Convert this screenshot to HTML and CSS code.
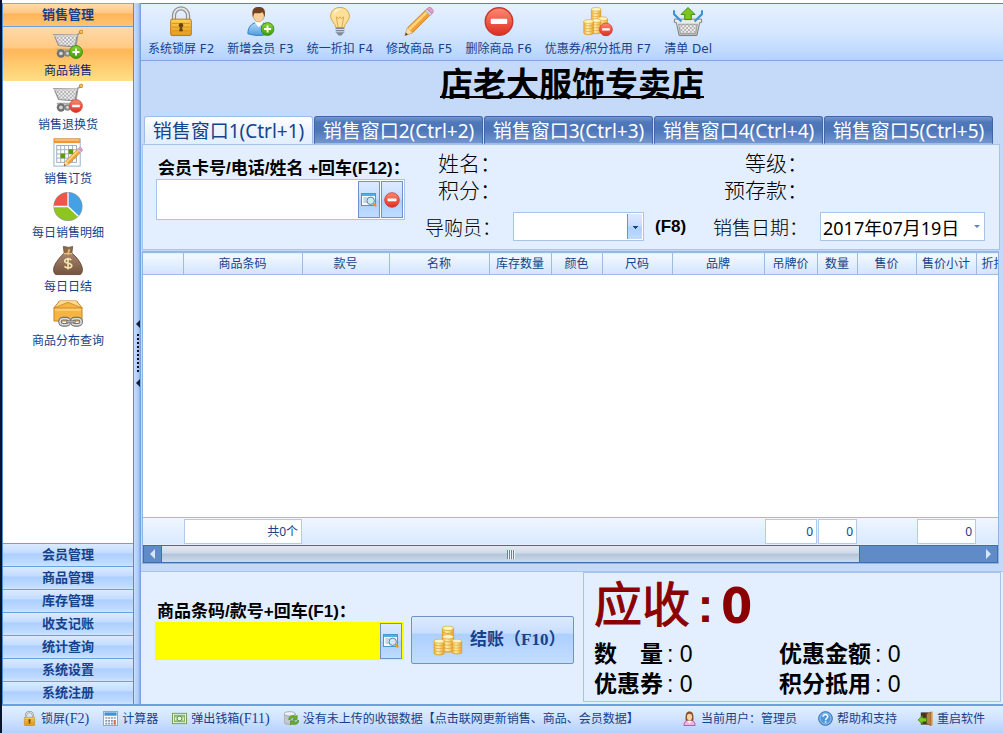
FILE: index.html
```html
<!DOCTYPE html>
<html lang="zh-CN">
<head>
<meta charset="utf-8">
<title>店老大服饰专卖店</title>
<link rel="stylesheet" href="styles.css">
</head>
<body>
<svg class="defs" aria-hidden="true">
  <defs>
    <linearGradient id="gold" x1="0" y1="0" x2="1" y2="0"><stop offset="0" stop-color="#f0b23c"/><stop offset=".4" stop-color="#fff0ae"/><stop offset="1" stop-color="#e6a52c"/></linearGradient>
    <linearGradient id="lockbody" x1="0" y1="0" x2="0" y2="1"><stop offset="0" stop-color="#ffd257"/><stop offset="1" stop-color="#e39a1b"/></linearGradient>
    <linearGradient id="steel" x1="0" y1="0" x2="0" y2="1"><stop offset="0" stop-color="#f4f4f4"/><stop offset="1" stop-color="#b9b9b9"/></linearGradient>
    <linearGradient id="redg" x1="0" y1="0" x2="0" y2="1"><stop offset="0" stop-color="#ff8a72"/><stop offset="1" stop-color="#dd2d22"/></linearGradient>
    <linearGradient id="greeng" x1="0" y1="0" x2="0" y2="1"><stop offset="0" stop-color="#8ed22f"/><stop offset="1" stop-color="#3f9e0c"/></linearGradient>
    <linearGradient id="blueg" x1="0" y1="0" x2="0" y2="1"><stop offset="0" stop-color="#b5dcfb"/><stop offset="1" stop-color="#4f9ddf"/></linearGradient>
    <linearGradient id="sackg" x1="0" y1="0" x2="0" y2="1"><stop offset="0" stop-color="#a9866c"/><stop offset="1" stop-color="#745440"/></linearGradient>
    <pattern id="mesh" width="4" height="4" patternUnits="userSpaceOnUse"><rect width="4" height="4" fill="#f0f0f0"/><path d="M0 0h2v2H0zM2 2h2v2H2z" fill="#b0b0b0"/></pattern>
    <symbol id="minus" viewBox="0 0 16 16"><circle cx="8" cy="8" r="7.3" fill="url(#redg)" stroke="#c9382c" stroke-width=".8"/><rect x="3.600" y="6.500" width="8.800" height="2.800" rx=".5" fill="#fff"/></symbol>
    <symbol id="plus" viewBox="0 0 16 16"><circle cx="8" cy="8" r="7.3" fill="url(#greeng)" stroke="#2f8a0b" stroke-width="1"/><path d="M8 4v8M4 8h8" stroke="#fff" stroke-width="2.2"/></symbol>
    <symbol id="cart" viewBox="0 0 32 32"><path d="M30 3l-3.500 2-3 17.500" fill="none" stroke="#a2a2a2" stroke-width="1.800"/><path d="M1 5.500l25 .5-2.500 12.500L6 17z" fill="url(#mesh)" stroke="#8d8d8d" stroke-width="1.200"/><path d="M1 6.500h25" stroke="#cfcfcf" stroke-width="1.800"/><path d="M4 21.500h20" stroke="#a9a9a9" stroke-width="2"/><circle cx="8.500" cy="25.500" r="4.500" fill="#707070"/><circle cx="8.500" cy="25.500" r="2" fill="#d2d2d2"/><circle cx="15.500" cy="25.500" r="3.500" fill="#8a8a8a"/><circle cx="15.500" cy="25.500" r="1.400" fill="#ddd"/><circle cx="30" cy="2.500" r="1.900" fill="#f8c458" stroke="#c07d1a" stroke-width=".9"/></symbol>
    <symbol id="i-cart-add" viewBox="0 0 32 32"><use href="#cart"/><use href="#plus" x="17" y="16.500" width="15" height="15"/></symbol>
    <symbol id="i-cart-del" viewBox="0 0 32 32"><use href="#cart"/><use href="#minus" x="17" y="16.500" width="15" height="15"/></symbol>
    <symbol id="pencil" viewBox="0 0 32 32"><path d="M1 31l2.500-8L24 3l5 5L9 28z" fill="#f5a12d" stroke="#c36f14" stroke-width=".8"/><path d="M4.500 23.500L24.500 4l1.800 1.800L6.500 25.500z" fill="#ffd583"/><path d="M1 31l2.500-8 5.300 5z" fill="#f7dcae"/><path d="M1 31l1-3.300 2.300 2.200z" fill="#554433"/><path d="M22.500 4.500l2-2 5.300 5.300-2 2z" fill="#cfd4dc" stroke="#8d949e" stroke-width=".6"/><path d="M24.500 2.500l1.300-1.300c2.500-1.500 7 2.600 5 5.500l-1 1.100z" fill="#e49cc9" stroke="#b7699c" stroke-width=".6"/></symbol>
    <symbol id="i-calendar" viewBox="0 0 32 32"><rect x="1" y="1.500" width="28" height="29" fill="#fdfdfd" stroke="#8fb0cc"/><rect x="1" y="1" width="28" height="5" fill="#f3962f"/><rect x="2" y="2" width="26" height="1.500" fill="#ffc98a"/><rect x="4" y="8.500" width="21" height="18" fill="#fff" stroke="#9aa9b5"/><path d="M4 13h21M4 17.500h21M4 22h21M8.200 8.500v18M12.400 8.500v18M16.600 8.500v18M20.800 8.500v18" stroke="#a3afba" stroke-width="1"/><path d="M8 17h5v5H8zM16.600 12.500h5v5h-5z" fill="#5c9a12"/><use href="#pencil" x="11" y="10" width="21" height="21"/></symbol>
    <symbol id="i-pie" viewBox="0 0 32 32"><circle cx="16" cy="16" r="15.500" fill="#8f9e9b"/><path d="M16 16V1a15 15 0 0 1 11 25z" fill="#46a0e4"/><path d="M16 16L27 26A15 15 0 0 1 1 16z" fill="#8ec51f"/><path d="M16 16H1A15 15 0 0 1 16 1z" fill="#ee5649"/><path d="M16 1v15H1M16 16l11 10.500" fill="none" stroke="#fff" stroke-width="1.400"/></symbol>
    <symbol id="i-sack" viewBox="0 0 32 32"><path d="M11 1l6 1 4-1-1 8H12z" fill="#8d6b53" stroke="#604534" stroke-width=".8"/><path d="M12 8h8c5 4 9 9 11 15 1 4 0 7-2 8H3c-2-1-3-4-2-8C3 17 8 12 12 8z" fill="url(#sackg)" stroke="#5f4433" stroke-width=".9"/><path d="M11.500 8.500h9M17.500 4l-2 6" stroke="#e7c06b" stroke-width="1.800"/><path d="M19.500 15.500c-2-2-7-1.500-7 1 0 3.500 7.500 1.500 7.500 5 0 2.800-5.500 3-7.800.8M16 13v12.500" fill="none" stroke="#f6e6ab" stroke-width="1.700"/></symbol>
    <symbol id="i-box" viewBox="0 0 32 32"><path d="M7 1.500h18l6 7.500v14H1V9z" fill="#f6b443" stroke="#c98325" stroke-width="1"/><path d="M7 1.500L1 9h30l-6-7.500M1 9L16 3l15 6" fill="#ffd98c" stroke="#c98a30" stroke-width=".9"/><path d="M2 10h28v2H2z" fill="#ffd07a"/><g fill="none" stroke="#737373" stroke-width="4"><rect x="7.500" y="20.500" width="10" height="6.500" rx="3.200"/><rect x="20" y="20.500" width="10" height="6.500" rx="3.200"/></g><g fill="none" stroke="#dedede" stroke-width="1.600"><rect x="7.500" y="20.500" width="10" height="6.500" rx="3.200"/><rect x="20" y="20.500" width="10" height="6.500" rx="3.200"/></g><path d="M14 23.800h10" stroke="#6d6d6d" stroke-width="3"/><path d="M14.500 23.800h9" stroke="#d5d5d5" stroke-width="1"/></symbol>
    <symbol id="i-lock" viewBox="0 0 32 32"><path d="M8.500 15V9.500a7.500 7.500 0 0 1 15 0V15" fill="none" stroke="#8f8f8f" stroke-width="4.500"/><path d="M8.500 15V9.500a7.500 7.500 0 0 1 15 0V15" fill="none" stroke="#e6e6e6" stroke-width="2"/><rect x="5" y="13.500" width="22" height="17.500" rx="1.500" fill="url(#lockbody)" stroke="#b8740d"/><path d="M6.500 18h19M6.500 22h19M6.500 26h19" stroke="#d98f17" stroke-width="1"/><circle cx="16" cy="20" r="2.400" fill="#6b4208"/><path d="M16 20l1.500 6h-3z" fill="#6b4208" stroke="#6b4208"/></symbol>
    <symbol id="i-user" viewBox="0 0 32 32"><path d="M2 29c0-7 4-11 9-12h5c6 1 9 5 9 12-7 2.500-16 2.500-23 0z" fill="url(#blueg)" stroke="#3677b8"/><path d="M9.500 17l4 5 5-5-1-2h-6z" fill="#fff"/><ellipse cx="13.500" cy="9" rx="6" ry="7.500" fill="#f6cf9f" stroke="#b98350" stroke-width=".6"/><path d="M7.500 12C5.500 4 7.500.5 13.500.5S21.500 4 19.500 12c0-3-1-5-2-6-2.500 1.500-6 1.500-8 1-1 1-2 3-2 5z" fill="#74421f"/><use href="#plus" x="15.500" y="16.500" width="15" height="15"/></symbol>
    <symbol id="i-bulb" viewBox="0 0 32 32"><path d="M16 1c6 0 10 4 10 9.500 0 5-5 7-5.500 12h-9C11 17.500 6 15.500 6 10.500 6 5 10 1 16 1z" fill="#ffe09a" stroke="#d8a03d"/><path d="M10 5c2-3 6-3 8-2-4 0-7 3-8 7z" fill="#fff6d8"/><path d="M14 22l-2-11 2.500 2L16 11l1.500 2 2.500-2-2 11" fill="none" stroke="#d9a548" stroke-width="1"/><path d="M11.500 22.500h9v5l-3 3.500h-3l-3-3.500z" fill="#7d8998"/><path d="M11.500 24.500h9M11.500 27h9" stroke="#d6dce4" stroke-width="1.100"/></symbol>
    <symbol id="i-pencil" viewBox="0 0 32 32"><use href="#pencil"/></symbol>
    <symbol id="stack" viewBox="0 0 14 20"><path d="M1 3v14c0 3.500 12 3.500 12 0V3z" fill="url(#gold)" stroke="#d8992c" stroke-width=".8"/><path d="M1 6.500c0 2.600 12 2.600 12 0M1 10c0 2.600 12 2.600 12 0M1 13.500c0 2.600 12 2.600 12 0M1 17c0 2.600 12 2.600 12 0" fill="none" stroke="#dfa238" stroke-width=".9"/><ellipse cx="7" cy="3" rx="6" ry="2.400" fill="#fff3bd" stroke="#dca63c" stroke-width=".8"/></symbol>
    <symbol id="i-coins" viewBox="0 0 32 32"><use href="#stack" x="9" y="0" width="14" height="20"/><use href="#stack" x="9" y="9" width="14" height="20"/><use href="#stack" x="0" y="14" width="13" height="18"/><use href="#stack" x="19" y="14" width="13" height="17"/></symbol>
    <symbol id="i-coins-del" viewBox="0 0 32 32"><use href="#stack" x="8" y="0" width="12" height="18"/><use href="#stack" x="15" y="10" width="12" height="18"/><use href="#stack" x="8" y="12" width="12" height="18"/><use href="#stack" x="0" y="13" width="12" height="18"/><use href="#minus" x="17" y="17" width="15" height="15"/></symbol>
    <symbol id="i-basket" viewBox="0 0 32 32"><path d="M1.500 13.500h29V17h-2l-3 14H6.500L3.500 17h-2z" fill="url(#steel)" stroke="#7c7c7c"/><path d="M6 19h20l-2 10H8z" fill="url(#mesh)" stroke="#909090" stroke-width=".8"/><path d="M1 4v4l8 8M31 4v4l-8 8" fill="none" stroke="#3d93d6" stroke-width="2.400"/><path d="M16 1l7.500 7.500h-4V14h-7V8.500h-4z" fill="#7ac51e" stroke="#3d8a0b"/></symbol>
    <symbol id="i-find" viewBox="0 0 16 16"><rect x=".5" y="1.500" width="14" height="12" fill="#f6fbff" stroke="#4b97c8"/><rect x="1" y="2" width="13" height="2" fill="#4fb0e6"/><path d="M2.500 6h4M2.500 8h3M2.500 10h4" stroke="#9ab" stroke-width="1"/><circle cx="9.700" cy="8.800" r="3.700" fill="#cdeaf9" stroke="#4c87ad"/><path d="M12.500 11.600l2.600 2.700" stroke="#e59b25" stroke-width="2.300"/></symbol>
    <symbol id="i-calc" viewBox="0 0 16 16"><rect x=".5" y=".5" width="15" height="15" fill="#f8fafc" stroke="#8fa4ba"/><rect x="1.500" y="1.500" width="13" height="3.500" fill="#3e91d4"/><path d="M2.500 7.500h11M2.500 10.500h11M2.500 13.500h11" stroke="#8296ad" stroke-width="1.700" stroke-dasharray="2 1"/><path d="M12.500 10v4.500" stroke="#e36b2c" stroke-width="2"/></symbol>
    <symbol id="i-cash" viewBox="0 0 16 16"><rect x=".5" y="2.500" width="15" height="11" fill="#f3faea" stroke="#6f9b58"/><rect x="2.500" y="4.500" width="11" height="7" fill="#9fca83" stroke="#7bab61"/><circle cx="8" cy="8" r="2.500" fill="#e7f5da" stroke="#5e904a"/><path d="M4 7v3M12 7v3" stroke="#fff"/></symbol>
    <symbol id="i-sync" viewBox="0 0 16 16"><path d="M0 3v9c0 3 12 3 12 0V3z" fill="#c2c8ce" stroke="#8a929a" stroke-width=".7"/><ellipse cx="6" cy="3" rx="6" ry="2.300" fill="#eef1f4" stroke="#8a929a" stroke-width=".7"/><path d="M5 9c0-4 5-5 7.500-3l1.500-1.500V9H9.500L11 7.500C9.500 6.500 7.500 7 7 9zM16 10c0 4-5 5.500-7.500 3.500L7 15v-4.500h4.500L10 12c1.500 1 3.500.5 4-2z" fill="#67b520" stroke="#3a800d" stroke-width=".6"/></symbol>
    <symbol id="i-admin" viewBox="0 0 16 16"><path d="M2 15.500c0-4 2.500-6 6-6s6 2 6 6z" fill="#efb3e2" stroke="#a05cb0"/><path d="M4 10.500c-1-7.500 1-10 4-10s5 2.500 4 10z" fill="#8a4f25"/><ellipse cx="8" cy="6.500" rx="2.800" ry="3.500" fill="#f8d2a6"/><path d="M5.500 10.500l2.500 3 2.500-3z" fill="#fff"/></symbol>
    <symbol id="i-help" viewBox="0 0 16 16"><circle cx="8" cy="8" r="7.300" fill="#4e97dc" stroke="#2f68ac"/><circle cx="8" cy="8" r="5.900" fill="none" stroke="#b9dbf8" stroke-width=".8"/><path d="M5.500 6.200C5.700 3 10.500 3.200 10.400 6c0 1.700-2.300 1.800-2.300 3.800M8.100 11v1.600" fill="none" stroke="#fff" stroke-width="1.600"/></symbol>
    <symbol id="i-exit" viewBox="0 0 16 16"><path d="M3 1.500h8v13H3z" fill="#4a3220"/><path d="M9 3l5-2v14.500L9 13.500z" fill="#b98048" stroke="#6f4520" stroke-width=".7"/><path d="M15.300.5v15" stroke="#d9b075" stroke-width="1.200"/><path d="M5 5v2.500h4v4H5V14L0 9.500z" fill="#7ecb27" stroke="#39800c" stroke-width=".8"/></symbol>
  </defs>
</svg>
<div class="app">
  <div class="workspace">
    <nav class="sidebar">
      <h2 class="group group-open">销售管理</h2>
      <div class="side-items">
        <a class="side-item selected" href="#"><svg class="icon"><use href="#i-cart-add"/></svg>商品销售</a>
        <a class="side-item" href="#"><svg class="icon"><use href="#i-cart-del"/></svg>销售退换货</a>
        <a class="side-item" href="#"><svg class="icon"><use href="#i-calendar"/></svg>销售订货</a>
        <a class="side-item" href="#"><svg class="icon"><use href="#i-pie"/></svg>每日销售明细</a>
        <a class="side-item" href="#"><svg class="icon"><use href="#i-sack"/></svg>每日日结</a>
        <a class="side-item" href="#"><svg class="icon"><use href="#i-box"/></svg>商品分布查询</a>
      </div>
      <button class="group">会员管理</button>
      <button class="group">商品管理</button>
      <button class="group">库存管理</button>
      <button class="group">收支记账</button>
      <button class="group">统计查询</button>
      <button class="group">系统设置</button>
      <button class="group">系统注册</button>
    </nav>
    <div class="splitter"><i class="arrow"></i><i class="dots"></i><i class="arrow"></i></div>
    <main class="main">
      <div class="toolbar">
        <button class="tool"><svg class="icon"><use href="#i-lock"/></svg>系统锁屏 F2</button>
        <button class="tool"><svg class="icon"><use href="#i-user"/></svg>新增会员 F3</button>
        <button class="tool"><svg class="icon"><use href="#i-bulb"/></svg>统一折扣 F4</button>
        <button class="tool"><svg class="icon"><use href="#i-pencil"/></svg>修改商品 F5</button>
        <button class="tool"><svg class="icon"><use href="#minus"/></svg>删除商品 F6</button>
        <button class="tool"><svg class="icon"><use href="#i-coins-del"/></svg>优惠券/积分抵用 F7</button>
        <button class="tool"><svg class="icon"><use href="#i-basket"/></svg>清单 Del</button>
      </div>
      <h1 class="title">店老大服饰专卖店</h1>
      <div class="tabs" role="tablist">
        <button class="tab active" role="tab" aria-selected="true">销售窗口1(Ctrl+1)</button>
        <button class="tab" role="tab">销售窗口2(Ctrl+2)</button>
        <button class="tab" role="tab">销售窗口3(Ctrl+3)</button>
        <button class="tab" role="tab">销售窗口4(Ctrl+4)</button>
        <button class="tab" role="tab">销售窗口5(Ctrl+5)</button>
      </div>
      <section class="member">
        <div class="lookup">
          <label class="strong" for="card">会员卡号/电话/姓名 +回车(F12)：</label>
          <div class="field">
            <input id="card" type="text">
            <button class="mini" aria-label="查找会员"><svg><use href="#i-find"/></svg></button>
            <button class="mini" aria-label="清除会员"><svg><use href="#minus"/></svg></button>
          </div>
        </div>
        <div class="details">
          <span class="caption">姓名：</span><span></span><span class="caption">等级：</span><span></span>
          <span class="caption">积分：</span><span></span><span class="caption">预存款：</span><span></span>
          <label class="caption small" for="guide">导购员：</label>
          <div class="guide"><select id="guide"><option></option></select><span class="strong">(F8)</span></div>
          <label class="caption small" for="date">销售日期：</label>
          <div class="date"><input id="date" type="text" value="2017年07月19日"><button class="drop" aria-label="选择日期"></button></div>
        </div>
      </section>
      <section class="sheet">
        <table class="goods">
          <colgroup><col class="w40"><col class="w119"><col class="w87"><col class="w100"><col class="w62"><col class="w51"><col class="w70"><col class="w92"><col class="w53"><col class="w40"><col class="w59"><col class="w60"><col></colgroup>
          <thead><tr><th></th><th>商品条码</th><th>款号</th><th>名称</th><th>库存数量</th><th>颜色</th><th>尺码</th><th>品牌</th><th>吊牌价</th><th>数量</th><th>售价</th><th>售价小计</th><th class="cut">折扣</th></tr></thead>
          <tbody><tr><td colspan="13"></td></tr></tbody>
          <tfoot><tr><td></td><td><output>共0个</output></td><td></td><td></td><td></td><td></td><td></td><td></td><td><output>0</output></td><td><output>0</output></td><td></td><td><output>0</output></td><td></td></tr></tfoot>
        </table>
        <div class="scroll">
          <button class="step back" aria-label="向左"></button>
          <div class="thumb"><i class="grip"></i></div>
          <button class="step next" aria-label="向右"></button>
        </div>
      </section>
      <section class="checkout">
        <div class="entry">
          <div class="lookup">
            <label class="strong" for="code">商品条码/款号+回车(F1)：</label>
            <div class="field yellow">
              <input id="code" type="text">
              <button class="mini" aria-label="查找商品"><svg><use href="#i-find"/></svg></button>
            </div>
          </div>
          <button class="pay"><svg class="icon"><use href="#i-coins"/></svg>结账（F10）</button>
        </div>
        <div class="totals">
          <div class="due"><span>应收</span><b>:</b><strong>0</strong></div>
          <dl class="sums">
            <div><dt>数　量</dt><dd>: 0</dd></div>
            <div><dt>优惠金额</dt><dd>: 0</dd></div>
            <div><dt>优惠券</dt><dd>: 0</dd></div>
            <div><dt>积分抵用</dt><dd>: 0</dd></div>
          </dl>
        </div>
      </section>
    </main>
  </div>
  <footer class="status">
    <button><svg><use href="#i-lock"/></svg><span>锁屏<span class="key">(F2)</span></span></button>
    <button><svg><use href="#i-calc"/></svg>计算器</button>
    <button><svg><use href="#i-cash"/></svg><span>弹出钱箱<span class="key">(F11)</span></span></button>
    <button><svg><use href="#i-sync"/></svg>没有未上传的收银数据【点击联网更新销售、商品、会员数据】</button>
    <div class="right">
      <span class="who"><svg><use href="#i-admin"/></svg>当前用户：管理员</span>
      <button><svg><use href="#i-help"/></svg>帮助和支持</button>
      <button><svg><use href="#i-exit"/></svg>重启软件</button>
    </div>
  </footer>
</div>
</body>
</html>
```
FILE: styles.css
```css
* { box-sizing: border-box; }

body {
  margin: 0;
  font: 12px/16px "Noto Sans", "Noto Sans CJK SC", sans-serif;
  color: #15428b;
  background: #fff;
}

button, input, select {
  font: inherit;
  color: inherit;
  margin: 0;
  padding: 0;
  border: 0;
  background: none;
  border-radius: 0;
}

a { color: inherit; text-decoration: none; }
h1, h2, dl, dd { margin: 0; }
.defs { position: absolute; width: 0; height: 0; }
.icon { width: 30px; height: 31px; flex: none; }

.app {
  height: 100vh;
  padding-top: 3px;
  border-left: 2px solid #06142c;
  display: flex;
  flex-direction: column;
  overflow: hidden;
}

.workspace { flex: 1; min-height: 0; display: flex; }

/* Sidebar */
.sidebar {
  width: 132px;
  flex: none;
  display: flex;
  flex-direction: column;
  border: solid #4f8cda;
  border-width: 0 1px;
  background: #fff;
}

.group {
  height: 23px;
  flex: none;
  padding-bottom: 3px;
  border-top: 1px solid #6a9fe0;
  font-size: 13px;
  font-weight: bold;
  line-height: 18px;
  text-align: center;
  background: linear-gradient(#dbeaff, #c4dcff 40%, #accfff 45%, #bfdaff 85%, #cfe4ff);
}

.group-open {
  height: 24px;
  line-height: 21px;
  border-top-color: #8aa9d0;
  border-bottom: 1px solid #6a9fe0;
  background: linear-gradient(#ffdcaf, #ffc884 40%, #ffb559 45%, #ffc470);
}

.side-items { flex: 1; min-height: 0; }

.side-item {
  height: 54px;
  padding-top: 2px;
  display: flex;
  flex-direction: column;
  align-items: center;
  gap: 3px;
}

.selected {
  color: #0c1f7a;
  background: linear-gradient(#ffd9a8, #ffca85 38%, #ffb658 42%, #ffdf86);
}

.splitter {
  width: 7px;
  flex: none;
  display: flex;
  flex-direction: column;
  align-items: center;
  justify-content: center;
  gap: 6px;
  background: linear-gradient(90deg, #c7defc, #aecbf3 60%, #6a9ce0);
}

.arrow { border: 4px solid transparent; border-left: 0; border-right-color: #1a1a3a; }
.dots { width: 2px; height: 39px; background: repeating-linear-gradient(#111 0 2px, transparent 2px 4px); }

.main {
  flex: 1;
  min-width: 0;
  display: flex;
  flex-direction: column;
  background: #c5daf8;
}

/* Toolbar and title */
.toolbar {
  height: 58px;
  flex: none;
  padding: 2px 7px 0;
  display: flex;
  gap: 13px;
  border-top: 1px solid #69819f;
  border-bottom: 1px solid #7ba7e0;
  background: linear-gradient(#e6f1ff, #d3e5ff 55%, #b4d3ff);
}

.tool {
  display: flex;
  flex-direction: column;
  align-items: center;
  gap: 4px;
  font-family: "DejaVu Sans", "Noto Sans CJK SC", sans-serif;
  white-space: nowrap;
}

.title {
  height: 55px;
  flex: none;
  font-family: "Noto Sans CJK SC", sans-serif;
  font-size: 33px;
  line-height: 43px;
  text-align: center;
  color: #000;
  text-decoration: underline;
  text-decoration-thickness: 2px;
  text-underline-offset: 0;
  text-decoration-skip-ink: none;
}

/* Tabs */
.tabs { display: flex; gap: 1px; padding-left: 3px; flex: none; }

.tab {
  height: 28px;
  flex: 0 1 169px;
  padding-top: 2px;
  font-size: 19px;
  line-height: 24px;
  white-space: nowrap;
  color: #fff;
  border: 1px solid #4068a8;
  border-bottom-color: #9fbfe9;
  border-radius: 3px 3px 0 0;
  background: linear-gradient(#7797cd, #4f78bb 20%, #4c75b8 50%, #7396cf);
}

.active {
  color: #15428b;
  border-color: #9dbde9;
  border-bottom-color: #e3efff;
  background: linear-gradient(#fff, #eef5ff 50%, #e3efff);
}

/* Member panel */
.member {
  height: 106px;
  flex: none;
  margin: 0 3px 0 1px;
  padding: 4px 0 0 13px;
  display: flex;
  color: #000;
  border: 1px solid #a6c5ee;
  background: #e3efff;
}

.strong {
  font-family: "Liberation Sans", "Noto Sans CJK SC", sans-serif;
  font-size: 17px;
  font-weight: bold;
  line-height: 21px;
  color: #000;
  white-space: nowrap;
}

.lookup { width: 249px; flex: none; display: flex; flex-direction: column; }
.member .lookup { padding-top: 9px; }
.member .lookup .strong, .entry .strong { padding-left: 2px; }

.field {
  height: 41px;
  display: flex;
  gap: 1px;
  padding: 1px;
  border: 1px solid #a9c4e8;
  background: #fff;
}

.field input { flex: 1; min-width: 0; padding: 0 6px; font-size: 20px; outline: 0; }

.mini {
  width: 22px;
  flex: none;
  display: flex;
  align-items: center;
  justify-content: center;
  border: 1px solid #6f93c9;
  background: linear-gradient(#dceaff, #c6ddff 48%, #acd0ff 52%, #bfdbff);
}

.mini svg { width: 16px; height: 16px; }

.details {
  flex: 1;
  min-width: 0;
  display: grid;
  grid-template-columns: 96px 208px 99px minmax(0, 1fr);
  grid-template-rows: 27px 27px 47px;
  align-items: center;
  padding-right: 14px;
}

.caption {
  font-size: 21px;
  font-weight: 300;
  line-height: 26px;
  text-align: right;
  white-space: nowrap;
}

.small { font-size: 19px; padding-top: 2px; }
.guide { display: flex; align-items: center; gap: 11px; padding-left: 12px; }

select {
  width: 131px;
  height: 29px;
  padding-left: 4px;
  appearance: none;
  border: 1px solid #a9c4e8;
  background:
    linear-gradient(#15428b, #15428b) no-repeat right 5px top 13px / 5px 1px,
    linear-gradient(#15428b, #15428b) no-repeat right 6px top 14px / 3px 1px,
    linear-gradient(#15428b, #15428b) no-repeat right 7px top 15px / 1px 1px,
    linear-gradient(#6f93c9, #6f93c9) no-repeat right 15px center / 1px 25px,
    linear-gradient(#dceaff, #c6ddff 48%, #acd0ff 52%, #bfdbff) no-repeat right 1px center / 14px 25px,
    #fff;
}

.date {
  height: 29px;
  margin-left: 12px;
  display: flex;
  border: 1px solid #a9c4e8;
  background: #fff;
}

.date input { flex: 1; min-width: 0; padding-left: 2px; font-size: 18px; }
.drop { width: 14px; flex: none; display: flex; align-items: center; justify-content: center; }
.drop::before { content: ""; border: 3px solid transparent; border-top-color: #5c86bb; border-bottom: 0; }

/* Goods table */
.sheet {
  flex: 1;
  min-height: 0;
  margin: 1px 4px 0 1px;
  display: grid;
  grid-template-columns: minmax(0, 1fr);
  grid-template-rows: 1fr 18px;
  border: 1px solid #8fb3e3;
  background: #fff;
}

.goods {
  width: 100%;
  height: 100%;
  table-layout: fixed;
  border-collapse: collapse;
}

.w40 { width: 40px; }
.w51 { width: 51px; }
.w53 { width: 53px; }
.w59 { width: 59px; }
.w60 { width: 60px; }
.w62 { width: 62px; }
.w70 { width: 70px; }
.w87 { width: 87px; }
.w92 { width: 92px; }
.w100 { width: 100px; }
.w119 { width: 119px; }

.goods th {
  height: 22px;
  padding: 0;
  font-weight: normal;
  white-space: nowrap;
  overflow: hidden;
  border: solid #9ebce2;
  border-width: 1px 1px 1px 0;
  background: linear-gradient(#f4f9ff, #e3efff 50%, #d2e4fd);
}

.goods th.cut { padding-left: 5px; text-align: left; border-right: 0; }
.goods td { padding: 0; }

.goods tfoot td {
  height: 28px;
  padding: 1px 0 1px 1px;
  border-top: 1px solid #9ebce2;
  background: linear-gradient(#eff6ff, #d9e9ff);
}

output {
  height: 25px;
  padding-right: 3px;
  display: block;
  line-height: 24px;
  text-align: right;
  border: 1px solid #b1cbec;
  background: #fff;
}

.scroll { display: flex; border: 1px solid #3e6db0; background: #5f8bc6; }
.step { width: 17px; flex: none; display: flex; align-items: center; justify-content: center; }
.step::before { content: ""; border: 5px solid transparent; }
.back::before { border-left: 0; border-right-color: #d6e6fb; }
.next::before { border-right: 0; border-left-color: #d6e6fb; }
.next { margin-left: auto; }

.thumb {
  width: 82%;
  display: flex;
  align-items: center;
  justify-content: center;
  border: solid #3e6db0;
  border-width: 0 1px;
  background: linear-gradient(#e2e9f2, #ced9e8 45%, #b3c3da 50%, #d0dbea);
}

.grip { width: 8px; height: 9px; background: repeating-linear-gradient(90deg, #5c82b8 0 1px, #eef4fc 1px 2px); }

/* Checkout */
.checkout {
  height: 133px;
  flex: none;
  margin-top: 7px;
  display: flex;
  border-top: 1px solid #a6c5ee;
  background: #e3efff;
}

.entry { width: 442px; flex: none; padding: 29px 0 0 14px; display: flex; gap: 7px; }
.yellow { height: 38px; border-color: #ff0; background: #ff0; padding: 0 1px 0 0; }

.pay {
  width: 163px;
  height: 48px;
  margin-top: 15px;
  display: flex;
  align-items: center;
  padding-left: 21px;
  gap: 7px;
  font-family: "Liberation Serif", "Noto Sans CJK SC", serif;
  font-size: 17px;
  font-weight: bold;
  white-space: nowrap;
  border: 1px solid #6f93c9;
  border-radius: 2px;
  background: linear-gradient(#dceaff, #c9dfff 34%, #add0ff 38%, #c3ddff);
}

.totals {
  flex: 1;
  min-width: 0;
  margin: 0 2px 2px 0;
  padding-left: 10px;
  border: 1px solid #a6c5ee;
  font-family: "Liberation Sans", "Noto Sans CJK SC", sans-serif;
  color: #000;
}

.due {
  height: 66px;
  display: flex;
  align-items: center;
  font-size: 48px;
  line-height: 66px;
  color: #8b0000;
}

.due span { -webkit-text-stroke: 1px #8b0000; }
.due b { width: 31px; text-align: center; }
.due strong { font-family: "DejaVu Sans Condensed", "DejaVu Sans", sans-serif; font-size: 50px; }
.sums { display: grid; grid-template-columns: 185px 1fr; }
.sums div { display: flex; height: 30px; font-size: 23px; line-height: 30px; }
.sums dt { font-weight: bold; }
.sums dd { padding-left: 4px; }

/* Status bar */
.status {
  height: 29px;
  flex: none;
  padding: 0 18px 2px 20px;
  display: flex;
  align-items: center;
  gap: 14px;
  white-space: nowrap;
  border-top: 2px solid #6a9fe0;
  background: linear-gradient(#e3efff, #cfe2ff 50%, #b3d1fc);
}

.status button, .who { display: flex; align-items: center; gap: 4px; }
.status svg { width: 15px; height: 15px; flex: none; }
.key { font-family: "Liberation Serif", serif; font-size: 14px; }
.right { margin-left: auto; display: flex; gap: 21px; }
```
